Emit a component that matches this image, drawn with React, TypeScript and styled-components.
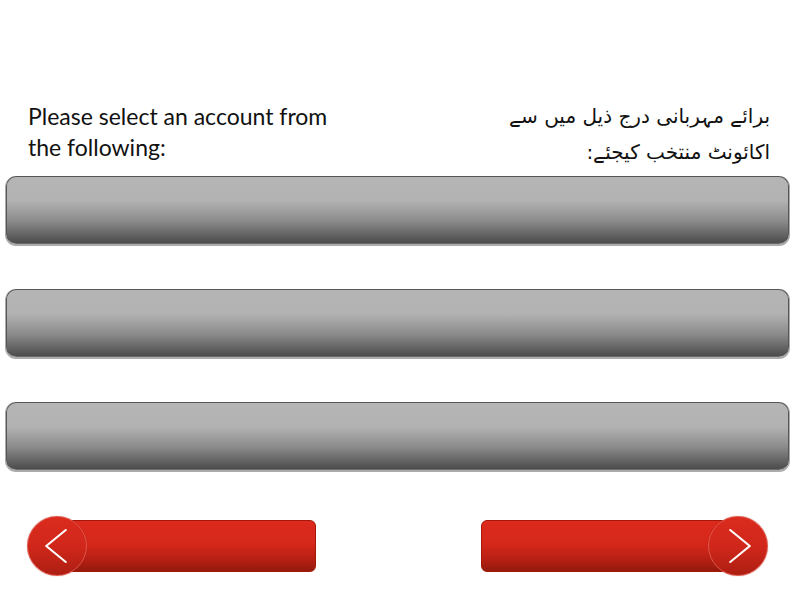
import styled, { createGlobalStyle } from 'styled-components';

const GlobalStyle = createGlobalStyle`
  html, body {
    margin: 0;
    padding: 0;
    background: #ffffff;
  }
  * {
    box-sizing: border-box;
  }
`;

const Screen = styled.div`
  width: 796px;
  height: 600px;
  display: flex;
  flex-direction: column;
  background: #ffffff;
  overflow: hidden;
`;

const Header = styled.div`
  height: 176px;
  display: flex;
  flex-direction: row;
  justify-content: space-between;
  align-items: flex-start;
  padding: 98px 26px 0 28px;
`;

const Prompt = styled.p`
  margin: 3px 0 0;
  font-family: Lato, 'Noto Sans', sans-serif;
  font-size: 23px;
  line-height: 31px;
  color: #111111;
`;

const PromptUrdu = styled.p`
  margin: 0;
  direction: rtl;
  text-align: right;
  font-family: 'DejaVu Sans', sans-serif;
  font-size: 20px;
  line-height: 36px;
  color: #111111;
`;

const AccountList = styled.div`
  display: flex;
  flex-direction: column;
  gap: 45px;
  padding: 0 7px 0 6px;
`;

const AccountBar = styled.button`
  height: 68px;
  width: 100%;
  cursor: pointer;
  outline: none;
  border: 1.5px solid #565656;
  border-bottom-color: #6a6a6a;
  border-radius: 10px;
  background: linear-gradient(#b6b5b6 0%, #b3b2b3 36%, #8c8c8c 66%, #4c4c4c 100%);
  box-shadow: 0 1px 0 1px #ababab;
`;

const Footer = styled.div`
  display: flex;
  flex-direction: row;
  justify-content: space-between;
  padding: 46px 28px 0 27px;
`;

const NavButton = styled.button<{ direction: 'back' | 'next' }>`
  width: ${({ direction }) => (direction === 'back' ? '289px' : '287px')};
  height: 60px;
  padding: 0;
  border: none;
  background: none;
  cursor: pointer;
  display: flex;
  flex-direction: ${({ direction }) => (direction === 'back' ? 'row' : 'row-reverse')};
  align-items: center;
`;

const NavBody = styled.span<{ direction: 'back' | 'next' }>`
  flex: 1;
  height: 52px;
  ${({ direction }) => (direction === 'back' ? 'margin-left: -30px;' : 'margin-right: -30px;')}
  border: 1px solid #a5170b;
  border-radius: 6px;
  background: linear-gradient(#dc2a1d 0%, #d5281b 45%, #b92014 75%, #941a0d 100%);
`;

const NavCircle = styled.span`
  position: relative;
  z-index: 1;
  width: 60px;
  height: 60px;
  flex-shrink: 0;
  border-radius: 50%;
  display: flex;
  align-items: center;
  justify-content: center;
  border: 1px solid #e2574a;
  background: linear-gradient(#da2b1e 0%, #d1271b 50%, #ad1e12 100%);
  box-shadow: 0 0 1px rgba(120, 20, 10, 0.6);
`;

function Chevron({ direction }: { direction: 'back' | 'next' }) {
  const points = direction === 'back' ? '20,1 1,16.5 20,32' : '1,1 20,16.5 1,32';
  return (
    <svg width="22" height="34" viewBox="0 0 21 33" style={{ marginLeft: direction === 'back' ? -2 : 3 }}>
      <polyline points={points} fill="none" stroke="#ffffff" strokeWidth="2" strokeLinecap="round" strokeLinejoin="round" />
    </svg>
  );
}

export default function App() {
  return (
    <>
      <GlobalStyle />
      <Screen>
        <Header>
          <Prompt>
            Please select an account from
            <br />
            the following:
          </Prompt>
          <PromptUrdu lang="ur">
            برائے مہربانی درج ذیل میں سے
            <br />
            اکائونٹ منتخب کیجئے:
          </PromptUrdu>
        </Header>

        <AccountList>
          <AccountBar />
          <AccountBar />
          <AccountBar />
        </AccountList>

        <Footer>
          <NavButton direction="back">
            <NavCircle>
              <Chevron direction="back" />
            </NavCircle>
            <NavBody direction="back" />
          </NavButton>
          <NavButton direction="next">
            <NavCircle>
              <Chevron direction="next" />
            </NavCircle>
            <NavBody direction="next" />
          </NavButton>
        </Footer>
      </Screen>
    </>
  );
}
